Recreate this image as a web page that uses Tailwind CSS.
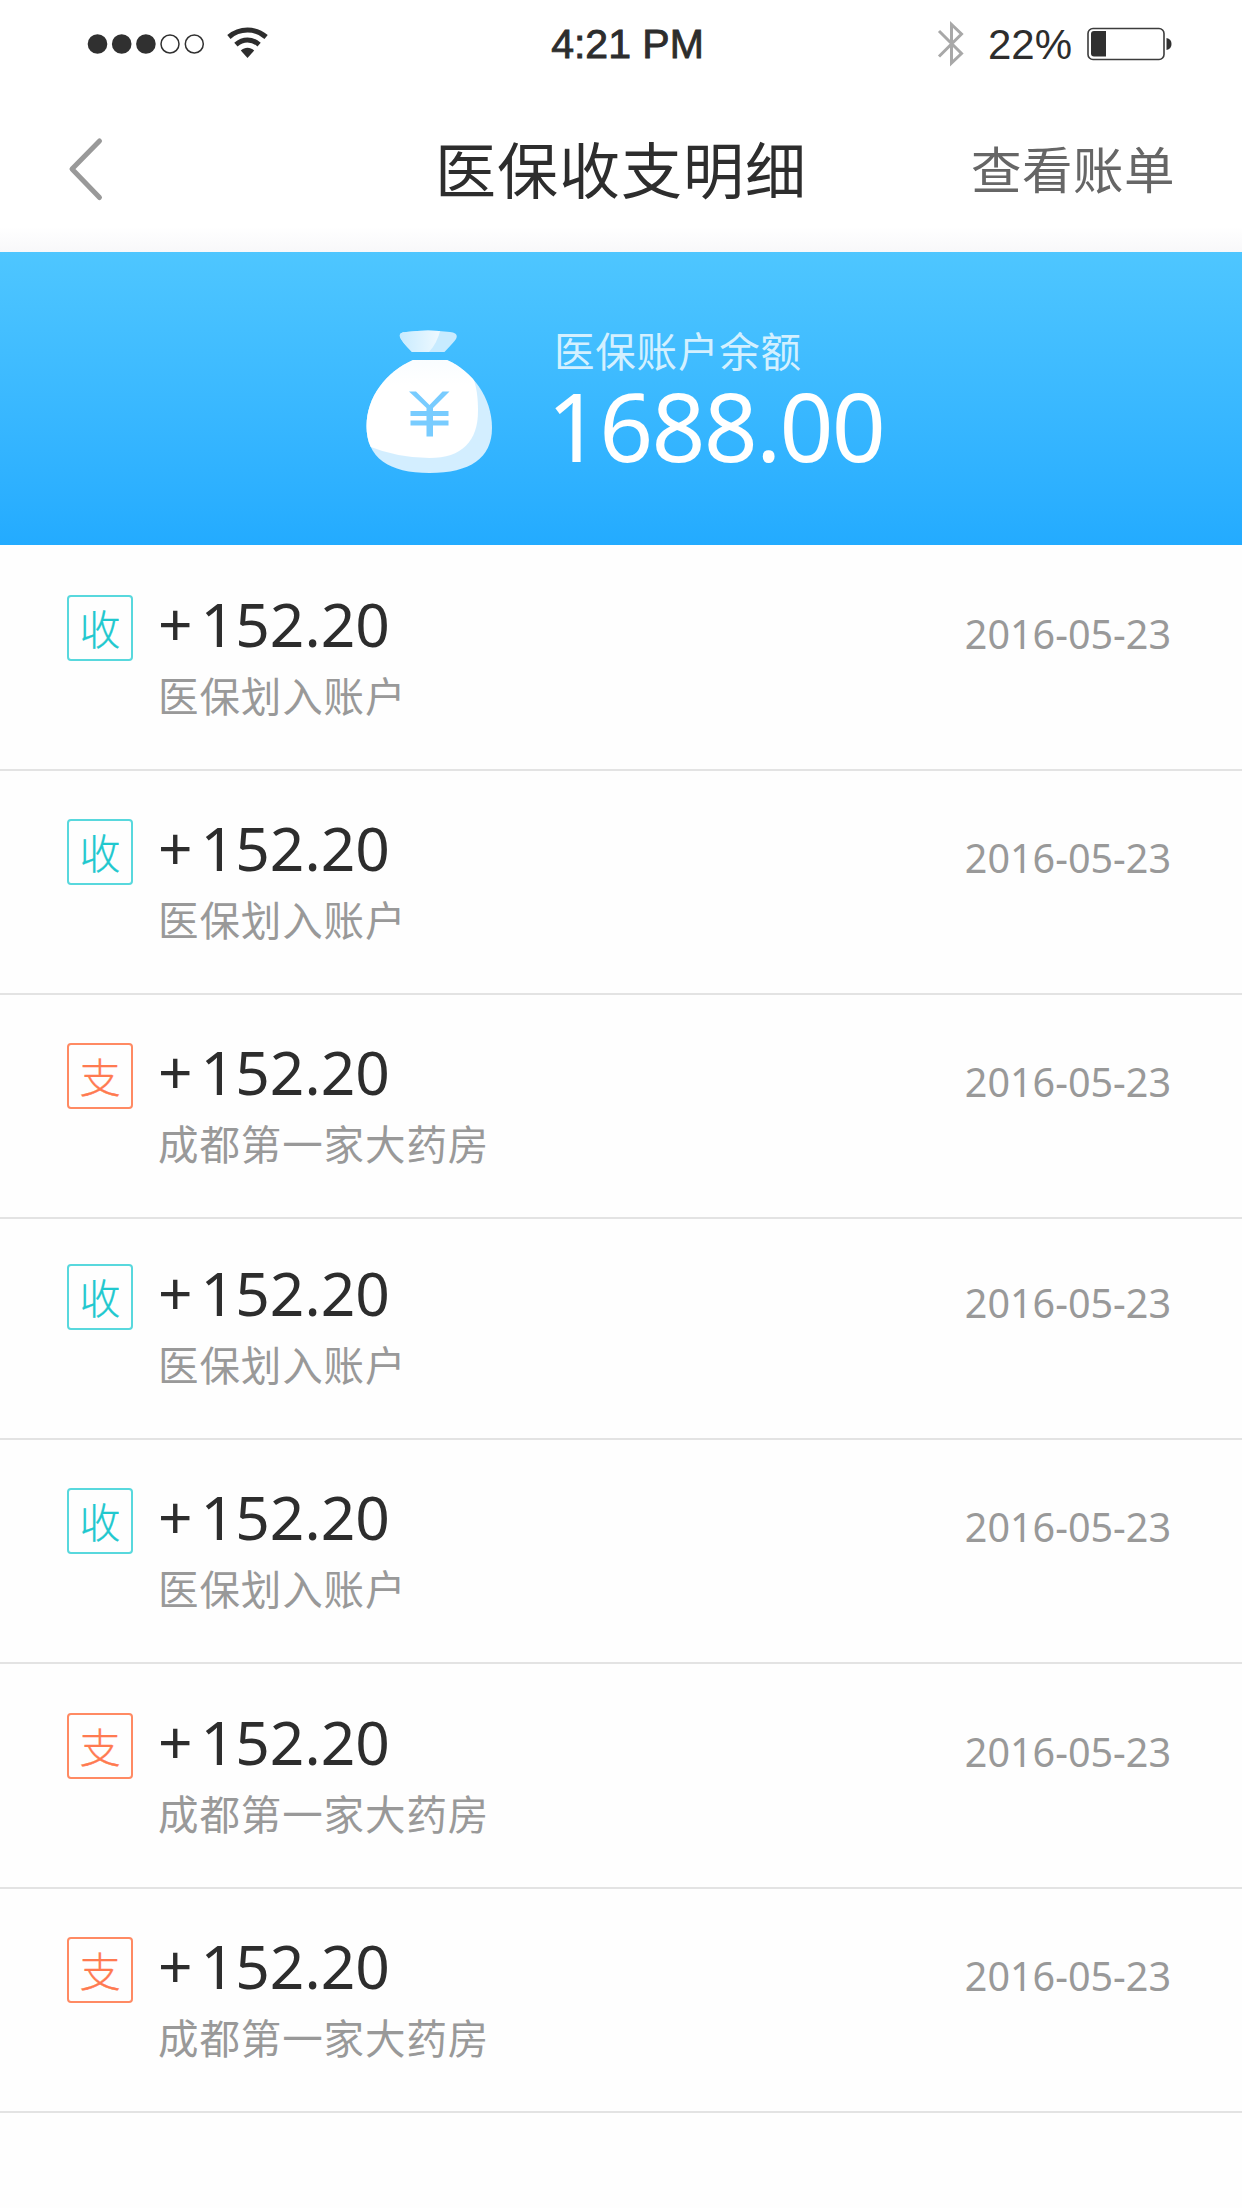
<!DOCTYPE html>
<html lang="zh-CN">
<head>
<meta charset="utf-8">
<title>医保收支明细</title>
<script src="https://cdn.jsdelivr.net/npm/@tailwindcss/browser@4"></script>
</head>
<body class="bg-white">
<div class="flex h-[2208px] w-[1242px] flex-col overflow-hidden bg-[#fefefe] font-['Noto_Sans','Noto_Sans_CJK_SC',sans-serif] text-[#2d2d2d]">
  <header class="flex h-[252px] flex-col bg-linear-to-b from-white from-90% to-[#f8f8fa]">
    <div class="grid h-[88px] grid-cols-3 items-center pr-[70px] pl-[87px] font-['Liberation_Sans',sans-serif]">
      <div class="flex items-center gap-[22px]">
        <svg class="h-[22px] w-[118px]" viewBox="0 0 118 22" fill="#303030">
          <circle cx="10.5" cy="11" r="9.8"/><circle cx="34.7" cy="11" r="9.8"/><circle cx="58.9" cy="11" r="9.8"/>
          <g fill="none" stroke="#303030" stroke-width="1.5"><circle cx="83" cy="11" r="9"/><circle cx="107.3" cy="11" r="9"/></g>
        </svg>
        <svg class="mb-[2px] h-[32px] w-[42px]" viewBox="0 0 42 32" fill="none" stroke="#2d2d2d" stroke-width="5">
          <path d="M1.9 10C12.5 .7 28.5 .7 39.100 10"/>
          <path d="M8.900 17.600C16 11.400 25 11.400 32.100 17.600"/>
          <path d="M13.800 23.400C18 20 23 20 27.200 23.400L20.500 31Z" fill="#2d2d2d" stroke="none"/>
        </svg>
      </div>
      <div class="pt-[1px] pr-[4px] text-center text-[41px] leading-none [-webkit-text-stroke:0.9px_#2d2d2d]">4:21 PM</div>
      <div class="flex items-center justify-end">
        <svg class="mr-[23px] h-[46px] w-[28px]" viewBox="0 0 28 46" fill="none" stroke="#a8a8a8" stroke-width="3">
          <path d="M2 10L24.500 32.500L14.500 42V3.500L24.500 13L2 35.500"/>
        </svg>
        <span class="mt-[2px] mr-[15px] text-[42px] leading-none">22%</span>
        <svg class="h-[34px] w-[85px]" viewBox="0 0 85 34">
          <rect x="1" y="1.500" width="76" height="31" rx="5" fill="none" stroke="#3c3c3c" stroke-width="1.600"/>
          <path d="M7 4H19V29.500H7Q4 29.500 4 26.500V7Q4 4 7 4Z" fill="#303030"/>
          <path d="M79.500 11Q84.500 12 84.500 17T79.500 23Z" fill="#303030"/>
        </svg>
      </div>
    </div>
    <div class="grid h-[158px] grid-cols-[1fr_auto_1fr] items-center pr-[67px] pl-[67px] font-['Noto_Sans_CJK_SC',sans-serif]">
      <svg class="mt-[3px] ml-[1px] h-[66px] w-[36px]" viewBox="0 0 36 66" fill="none" stroke="#999" stroke-width="5" stroke-linecap="round" stroke-linejoin="round"><path d="M31.500 5L4 33L31.500 61.500"/></svg>
      <h1 class="text-[61px] leading-none tracking-[1px]">医保收支明细</h1>
      <a class="text-right text-[50.500px] leading-none tracking-[0.500px] text-[#666]">查看账单</a>
    </div>
  </header>

  <section class="flex h-[293px] gap-[60px] bg-linear-to-b from-[#4ec6ff] to-[#23abff] pt-[76px] pl-[366px] text-white">
    <svg class="mt-[1px] h-[146px] w-[127px] overflow-visible" viewBox="0 0 127 146">
      <defs>
        <linearGradient id="tie"><stop stop-color="#c5eaff"/><stop offset="1" stop-color="#eff9ff"/></linearGradient>
        <linearGradient id="body" x2="0" y2="1"><stop stop-color="#f8fcff"/><stop offset=".3" stop-color="#fff"/></linearGradient>
        <clipPath id="bag"><path d="M47 31H81C106 42 126 68 126 99C126 129 104 144 63.500 144S.5 129 .5 97C.5 68 20 43 47 31Z"/></clipPath>
        <clipPath id="knot"><path d="M34 8C33 4 36 3.500 40 3Q62 0 84 3C90 3.500 92 6 90 10Q88 13 78.500 23H46Q35 12 34 8Z"/></clipPath>
      </defs>
      <g clip-path="url(#knot)"><path d="M30 -2H95V25H30Z" fill="#c8ebff"/><path d="M30 -2H75Q72 14 62 24H30Z" fill="url(#tie)"/></g>
      <g clip-path="url(#bag)"><path d="M0 30H127V146H0Z" fill="#d3eeff"/><path d="M-5 25H90C110 40 112 65 112 82C112 112 96 129 63.500 129Q32 129 2 117L-5 110Z" fill="url(#body)"/></g>
      <path d="M43 62.500H50L63.500 76L76.500 62.500H83.500L67 79V82H82.500V87H67V91.500H82.500V96.500H67V107.500H60.500V96.500H44.500V91.500H60.500V87H44.500V82H60.500V79Z" fill="#78ccff"/>
    </svg>
    <div class="flex flex-col">
      <p class="pl-[1px] font-['Noto_Sans_CJK_SC',sans-serif] text-[40.500px] leading-[44px] tracking-[0.800px] text-[#d3f0ff]">医保账户余额</p>
      <p class="-ml-[6px] text-[94.500px] leading-[108px] tracking-[-1.800px]">1688.00</p>
    </div>
  </section>

  <main id="list" class="flex flex-col"></main>
</div>
<script>
const rows = [['收', 226], ['收', 224], ['支', 224], ['收', 221], ['收', 224], ['支', 225], ['支', 224]];
document.getElementById('list').innerHTML = rows.map(([kind, height]) => {
  const income = kind === '收';
  const tone = income ? 'border-[#58d8dd] text-[#20c8ce]' : 'border-[#ff8a63] text-[#ff7a50]';
  return `<article class="flex shrink-0 items-end border-b-2 border-[#e3e3e3] pr-[71px] pl-[67px]" style="height:${height}px">
    <div class="flex h-[174px] w-full items-start">
      <div class="flex size-[66px] items-center justify-center rounded-[4px] border-2 pb-[2px] font-['Noto_Sans_CJK_SC',sans-serif] text-[41px] leading-none font-light [-webkit-text-stroke:0.3px_currentColor] ${tone}">${kind}</div>
      <div class="ml-[25px] flex flex-1 flex-col">
        <p class="h-[73px] text-[60.500px] leading-[58px]"><span class="mr-[8px]">+</span>152.20</p>
        <p class="font-['Noto_Sans_CJK_SC',sans-serif] text-[40.500px] leading-[54px] tracking-[0.900px] text-[#999]">${income ? '医保划入账户' : '成都第一家大药房'}</p>
      </div>
      <time class="mt-[12px] text-[39.500px] leading-[54px] text-[#999]">2016-05-23</time>
    </div>
  </article>`;
}).join('');
</script>
</body>
</html>
